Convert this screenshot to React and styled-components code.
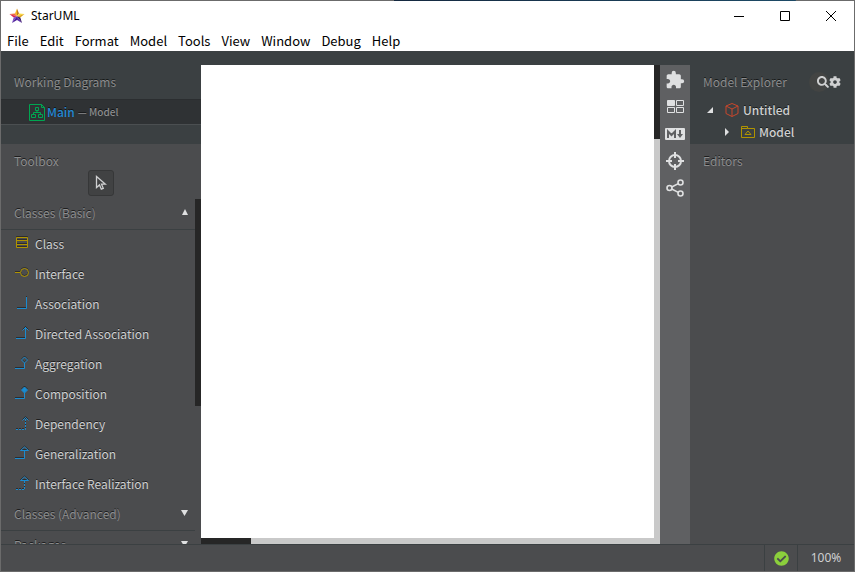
import React from 'react';
import styled, { createGlobalStyle, css } from 'styled-components';
import { MdExtension } from 'react-icons/md';
import { FaSearch, FaCog, FaCheckCircle } from 'react-icons/fa';

const COLORS = {
  frame: '#6b6b6b',
  panel: '#4b4c4e',
  panelDark: '#3b4042',
  strip: '#5f6062',
  thumb: '#262626',
  track: '#c9c9c9',
  line: '#3b4042',
  muted: '#8c8d8e',
  text: '#cfd0d1',
  bright: '#dfe0e1',
  gold: '#b09400',
  blue: '#1a8bd0',
  green: '#00a651',
  red: '#c8472c',
};

const fontStack = "'Noto Sans CJK SC', 'Noto Sans', sans-serif";

const menuItems = [
  'File',
  'Edit',
  'Format',
  'Model',
  'Tools',
  'View',
  'Window',
  'Debug',
  'Help',
];

const tools = [
  {
    name: 'Class',
    color: COLORS.gold,
    shape: <path d="M2.5 1.5h11v10h-11zM2.5 4.5h11M2.5 8.5h11" />,
  },
  {
    name: 'Interface',
    color: COLORS.gold,
    shape: (
      <>
        <path d="M1 6.5h5" />
        <circle cx="10.5" cy="6.5" r="4" />
      </>
    ),
  },
  { name: 'Association', shape: <path d="M12.5 1v11.5H3" /> },
  {
    name: 'Directed Association',
    shape: <path d="M11.5 1v11.5H2M8.5 4.5l3-3 3 3" />,
  },
  {
    name: 'Aggregation',
    shape: <path d="M10.5 7v5.5H1M10.5 1l3 3-3 3-3-3z" />,
  },
  {
    name: 'Composition',
    shape: (
      <>
        <path d="M10.5 7v5.5H1" />
        <path d="M10.5 1l3 3-3 3-3-3z" fill={COLORS.blue} />
      </>
    ),
  },
  {
    name: 'Dependency',
    shape: (
      <>
        <path d="M11.5 3v10.5H2" strokeDasharray="2 1" />
        <path d="M8.5 4.5l3-3 3 3" />
      </>
    ),
  },
  {
    name: 'Generalization',
    shape: <path d="M10.5 5v7.5H1M6.5 4.5l4-3.5 4 3.5z" />,
  },
  {
    name: 'Interface Realization',
    shape: (
      <>
        <path d="M10.5 5v8.5H1" strokeDasharray="2 1" />
        <path d="M6.5 4.5l4-3.5 4 3.5z" />
      </>
    ),
  },
];

const StarLogo = () => (
  <svg width="16" height="16" viewBox="0 0 16 16" aria-hidden="true">
    <path d="M8 .5v7.8L6 5.5z" fill="#f7b51e" />
    <path d="M8 .5l2 5-2 2.8z" fill="#c07a1c" />
    <path d="M.5 6L6 5.5l2 2.8z" fill="#f0703c" />
    <path d="M.5 6L8 8.3l-3.3 1.2z" fill="#d92450" />
    <path d="M15.5 6L10 5.5 8 8.3z" fill="#fbdc3a" />
    <path d="M15.5 6L8 8.3l3.3 1.2z" fill="#e0a41c" />
    <path d="M3 15l1.7-5.5L8 8.3z" fill="#7a48c8" />
    <path d="M3 15l5-6.7V12z" fill="#4a1e96" />
    <path d="M13 15L8 8.3V12z" fill="#5b2ba8" />
    <path d="M13 15l-1.7-5.5L8 8.3z" fill="#35185f" />
  </svg>
);

const DiagramIcon = () => (
  <svg width="16" height="17" viewBox="0 0 16 17" fill="none" stroke={COLORS.green}>
    <path d="M.5.5h12l3 3v13H.5zM12.5.5v3h3M6.5 3.5h3v3h-3zM8 6.5v2M4.5 10.5v-2h7v2M2.5 10.5h4v3h-4zM9.5 10.5h4v3h-4z" />
  </svg>
);

const CursorIcon = () => (
  <svg width="12" height="16" viewBox="0 0 12 16" fill="none" stroke={COLORS.text} strokeWidth="1.3">
    <path d="M1.5 1.5v11l3-2.6 1.8 4.3 2-.9-1.8-4.1h4z" />
  </svg>
);

const LayoutIcon = () => (
  <svg width="17" height="13" viewBox="0 0 17 13" fill="none" stroke={COLORS.bright}>
    <path d="M.5.5h7v5h-7z" fill={COLORS.bright} />
    <path d="M9.5.5h7v5h-7zM.5 7.5h7v5h-7zM9.5 7.5h7v5h-7z" />
  </svg>
);

const MarkdownIcon = () => (
  <svg width="20" height="12" viewBox="0 0 20 12">
    <rect width="20" height="12" rx="1" fill={COLORS.bright} />
    <path
      d="M3 10V3.5L6.500 7 10 3.500V10M15 2v5"
      fill="none"
      stroke={COLORS.strip}
      strokeWidth="2"
    />
    <path d="M12 6h6l-3 4z" fill={COLORS.strip} />
  </svg>
);

const TargetIcon = () => (
  <svg width="18" height="18" viewBox="0 0 18 18" fill="none" stroke={COLORS.bright} strokeWidth="2">
    <circle cx="9" cy="9" r="6" />
    <path d="M9 0v6M9 12v6M0 9h6M12 9h6" />
  </svg>
);

const ShareIcon = () => (
  <svg width="18" height="18" viewBox="0 0 18 18" fill="none" stroke={COLORS.bright} strokeWidth="1.6">
    <circle cx="3.5" cy="9" r="2.5" />
    <circle cx="14.5" cy="3.5" r="2.5" />
    <circle cx="14.5" cy="14.5" r="2.5" />
    <path d="M5.7 8l6.6-3.4M5.7 10l6.6 3.4" />
  </svg>
);

const CubeIcon = () => (
  <svg width="14" height="14" viewBox="0 0 14 14" fill="none" stroke={COLORS.red}>
    <path d="M7 .5L13 3v7.5l-6 3-6-3V3zM1 3l6 3 6-3M7 6v7.5" />
  </svg>
);

const PackageIcon = () => (
  <svg width="14" height="12" viewBox="0 0 14 12" fill="none" stroke={COLORS.gold}>
    <path d="M.5.5h6v2h7v9H.5zM.5 2.5h6M7 5l3 3.5H4z" />
  </svg>
);

const ArrowIcon = ({ dir }) => {
  const shapes = {
    up: 'M4 0l3 6H1z',
    down: 'M0 0h7L3.5 6z',
    open: 'M6 1v6H0z',
    right: 'M2 0l4 4-4 4z',
  };
  return (
    <svg width="8" height="8" viewBox="0 0 8 8" fill={COLORS.bright}>
      <path d={shapes[dir]} />
    </svg>
  );
};

const App = () => (
  <>
    <GlobalStyle />
    <Window>
      <TitleBar>
        <StarLogo />
        <Title>StarUML</Title>
        <WindowButton aria-label="Minimize">
          <svg width="10" height="10" stroke="#000" fill="none">
            <path d="M0 5.5h10" />
          </svg>
        </WindowButton>
        <WindowButton aria-label="Maximize">
          <svg width="10" height="10" stroke="#000" fill="none">
            <path d="M.5.5h9v9h-9z" />
          </svg>
        </WindowButton>
        <WindowButton aria-label="Close">
          <svg width="10" height="10" stroke="#000" fill="none">
            <path d="M0 0l10 10M10 0L0 10" />
          </svg>
        </WindowButton>
      </TitleBar>
      <MenuBar>
        {menuItems.map(item => (
          <MenuButton key={item}>{item}</MenuButton>
        ))}
      </MenuBar>
      <Workspace>
        <Sidebar>
          <DarkPanel>
            <PanelTitle>Working Diagrams</PanelTitle>
            <DiagramButton>
              <DiagramIcon />
              Main<small>— Model</small>
            </DiagramButton>
          </DarkPanel>
          <ToolboxPanel>
            <ToolboxTitle>Toolbox</ToolboxTitle>
            <CursorButton aria-label="Select">
              <CursorIcon />
            </CursorButton>
            <ToolArea>
              <ToolList>
                <GroupButton>
                  Classes (Basic)
                  <ArrowIcon dir="up" />
                </GroupButton>
                {tools.map(tool => (
                  <ToolButton key={tool.name}>
                    <ToolIcon
                      viewBox="0 -1 16 18"
                      stroke={tool.color || COLORS.blue}
                    >
                      {tool.shape}
                    </ToolIcon>
                    {tool.name}
                  </ToolButton>
                ))}
                <GroupButton>
                  Classes (Advanced)
                  <ArrowIcon dir="down" />
                </GroupButton>
                <GroupButton>
                  Packages
                  <ArrowIcon dir="down" />
                </GroupButton>
              </ToolList>
              <ScrollTrack>
                <ScrollThumb $size="60%" />
              </ScrollTrack>
            </ToolArea>
          </ToolboxPanel>
        </Sidebar>
        <Editor>
          <Canvas />
          <ScrollTrack $light>
            <ScrollThumb $size="15.6%" />
          </ScrollTrack>
          <ScrollTrack $light $horizontal>
            <ScrollThumb $horizontal $size="11%" />
          </ScrollTrack>
        </Editor>
        <Strip>
          <StripButton aria-label="Extensions">
            <MdExtension size={20} />
          </StripButton>
          <StripButton aria-label="Thumbnails">
            <LayoutIcon />
          </StripButton>
          <StripButton aria-label="Markdown">
            <MarkdownIcon />
          </StripButton>
          <StripButton aria-label="Locate">
            <TargetIcon />
          </StripButton>
          <StripButton aria-label="Relationships">
            <ShareIcon />
          </StripButton>
        </Strip>
        <RightSidebar>
          <DarkPanel>
            <PanelTitle>
              Model Explorer
              <Actions>
                <IconButton $round aria-label="Search">
                  <FaSearch size={12} />
                </IconButton>
                <IconButton aria-label="Settings">
                  <FaCog size={12} />
                </IconButton>
              </Actions>
            </PanelTitle>
            <Tree>
              <TreeButton>
                <ArrowIcon dir="open" />
                <CubeIcon />
                Untitled
              </TreeButton>
              <TreeButton $nested>
                <ArrowIcon dir="right" />
                <PackageIcon />
                Model
              </TreeButton>
            </Tree>
          </DarkPanel>
          <PanelTitle>Editors</PanelTitle>
        </RightSidebar>
      </Workspace>
      <StatusBar>
        <StatusButton aria-label="Validation">
          <FaCheckCircle size={15} color="#8bcf3c" />
        </StatusButton>
        <Zoom>100%</Zoom>
      </StatusBar>
    </Window>
  </>
);

export default App;

const GlobalStyle = createGlobalStyle`
  * {
    box-sizing: border-box;
  }
  body {
    margin: 0;
    font: 400 12px/20px ${fontStack};
  }
  button {
    margin: 0;
    padding: 0;
    border: 0;
    background: none;
    color: inherit;
    font: inherit;
    text-align: left;
    text-shadow: inherit;
  }
  svg {
    display: block;
    flex: none;
  }
`;

const Window = styled.div`
  display: flex;
  flex-direction: column;
  height: 100vh;
  padding: 1px;
  background: linear-gradient(90deg, #14283f, #1d4a66) 87% 0 / 47% 1px no-repeat
    ${COLORS.frame};
`;

const TitleBar = styled.header`
  display: flex;
  flex: none;
  align-items: center;
  height: 29px;
  padding-left: 8px;
  background: #fff;
`;

const Title = styled.h1`
  flex: 1;
  margin: 0 0 0 6px;
  font: 400 12px/20px 'Noto Sans', sans-serif;
`;

const WindowButton = styled.button`
  display: flex;
  align-items: center;
  justify-content: center;
  width: 46px;
  height: 29px;
`;

const MenuBar = styled.nav`
  display: flex;
  flex: none;
  gap: 11px;
  height: 21px;
  padding-left: 6px;
  background: #fff;
`;

const MenuButton = styled.button`
  font: 400 13px/20px ${fontStack};
`;

const Workspace = styled.main`
  display: flex;
  flex: 1;
  min-height: 0;
  background: ${COLORS.panelDark};
  color: ${COLORS.text};
  text-shadow: 0 -1px 0 rgba(0, 0, 0, 0.6);
`;

const Sidebar = styled.aside`
  display: flex;
  flex: none;
  flex-direction: column;
  width: 200px;
  background: ${COLORS.panel};
`;

const RightSidebar = styled(Sidebar)`
  width: 164px;
`;

const DarkPanel = styled.section`
  flex: none;
  height: 93px;
  padding-top: 14px;
  background: ${COLORS.panelDark};
`;

const PanelTitle = styled.h2`
  display: flex;
  align-items: center;
  height: 34px;
  margin: 0;
  padding: 0 13px;
  color: ${COLORS.muted};
  font-size: 12px;
  font-weight: 400;
`;

const ToolboxTitle = styled(PanelTitle)`
  height: 26px;
  padding-top: 8px;
`;

const DiagramButton = styled.button`
  display: flex;
  align-items: center;
  width: 100%;
  height: 26px;
  padding-left: 28px;
  border-top: 1px solid #2b2e30;
  border-bottom: 1px solid #4b4f51;
  background: #2f3234;
  color: #2489d4;
  font-weight: 500;

  svg {
    margin-right: 2px;
  }

  small {
    margin-left: 3px;
    color: ${COLORS.muted};
    font-size: 10px;
  }
`;

const ToolboxPanel = styled.section`
  display: flex;
  flex: 1;
  flex-direction: column;
  min-height: 0;
`;

const CursorButton = styled.button`
  display: flex;
  flex: none;
  align-items: center;
  align-self: center;
  justify-content: center;
  width: 26px;
  height: 26px;
  border: 1px solid #363738;
  border-radius: 3px;
  background: #414243;
`;

const ToolArea = styled.div`
  display: flex;
  flex: 1;
  min-height: 0;
  margin-top: 3px;
`;

const ToolList = styled.div`
  flex: 1;
  overflow: hidden;
`;

const GroupButton = styled.button`
  display: flex;
  align-items: center;
  justify-content: space-between;
  width: 100%;
  height: 31px;
  padding: 0 6px 2px 13px;
  border-bottom: 1px solid ${COLORS.line};
  color: ${COLORS.muted};
`;

const ToolButton = styled.button`
  display: flex;
  align-items: center;
  gap: 5px;
  width: 100%;
  height: 30px;
  padding: 0 0 2px 13px;
`;

const ToolIcon = styled.svg`
  width: 16px;
  height: 18px;
  fill: none;
  filter: drop-shadow(0 -1px 0 rgba(0, 0, 0, 0.4));
`;

const ScrollTrack = styled.div`
  width: 6px;
  background: ${props => (props.$light ? COLORS.track : 'transparent')};
  ${props =>
    props.$horizontal &&
    css`
      grid-column: 1 / 3;
      width: auto;
      height: 6px;
    `}
`;

const ScrollThumb = styled.div`
  width: ${props => (props.$horizontal ? props.$size : '100%')};
  height: ${props => (props.$horizontal ? '100%' : props.$size)};
  background: ${COLORS.thumb};
`;

const Editor = styled.section`
  display: grid;
  flex: 1;
  grid-template-columns: 1fr 6px;
  grid-template-rows: 1fr 6px;
  margin-top: 14px;
`;

const Canvas = styled.div`
  background: #fff;
`;

const Strip = styled.nav`
  display: flex;
  flex: none;
  flex-direction: column;
  width: 30px;
  margin-top: 14px;
  padding-top: 1px;
  background: ${COLORS.strip};
`;

const StripButton = styled.button`
  display: flex;
  align-items: center;
  justify-content: center;
  height: 27px;
  color: ${COLORS.bright};
`;

const Actions = styled.span`
  display: flex;
  align-items: center;
  margin-left: auto;
`;

const IconButton = styled.button`
  display: flex;
  align-items: center;
  justify-content: flex-end;
  height: 20px;
  color: ${COLORS.text};
  ${props =>
    props.$round &&
    css`
      width: 20px;
      border-radius: 50%;
      background: #434443;
    `}
`;

const Tree = styled.div`
  display: flex;
  flex-direction: column;
  font-weight: 500;
`;

const TreeButton = styled.button`
  display: flex;
  align-items: center;
  height: 22px;
  padding-left: ${props => (props.$nested ? 33 : 17)}px;

  svg:first-child {
    margin-right: 10px;
  }

  svg:nth-child(2) {
    margin-right: 4px;
  }
`;

const StatusBar = styled.footer`
  display: flex;
  flex: none;
  justify-content: flex-end;
  height: 27px;
  border-top: 1px solid ${COLORS.line};
  background: ${COLORS.panel};
  color: ${COLORS.text};
`;

const StatusButton = styled.button`
  display: flex;
  align-items: center;
  justify-content: center;
  width: 33px;
  border-left: 1px solid ${COLORS.line};
`;

const Zoom = styled.div`
  width: 57px;
  border-left: 1px solid ${COLORS.line};
  font: 400 12px/26px 'Noto Sans', sans-serif;
  text-align: center;
`;
